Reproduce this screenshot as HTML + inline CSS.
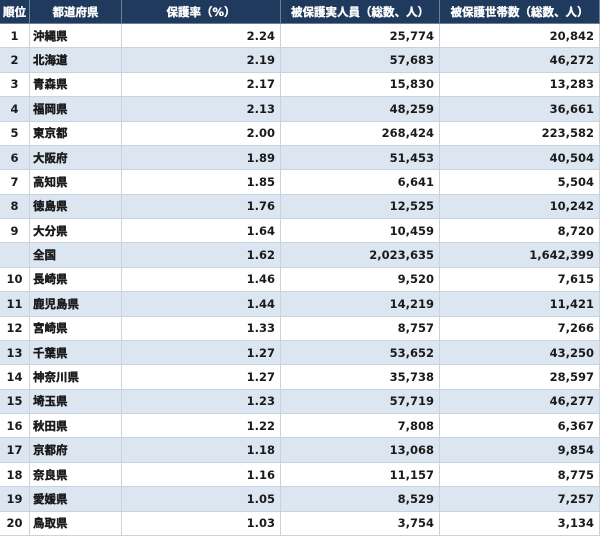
<!DOCTYPE html>
<html><head><meta charset="utf-8"><style>
body{margin:0;width:600px;height:536px;overflow:hidden;background:#fff}
.g{display:grid;grid-template-columns:30px 92px 159px 159px 160px;grid-template-rows:24px repeat(21,1fr);height:536px;width:600px;font-family:"DejaVu Sans","Noto Sans CJK JP",sans-serif;font-weight:bold;font-size:11.5px;color:#1a1a1a}
.g div{display:flex;align-items:center;border-right:1px solid #c9d3de;border-bottom:1px solid #c9d3de;box-sizing:border-box;white-space:nowrap}
.h{background:#1f3a5c!important;color:#fff;justify-content:center;border-color:#6a7f99!important;font-size:11.5px;-webkit-text-stroke:0.35px #fff}
.s{background:#dce6f1}
.r{justify-content:center}
.n{padding-left:3px;-webkit-text-stroke:0.4px #1a1a1a}
.v{justify-content:flex-end;padding-right:5px}
</style></head><body><div class="g" id="g">
<div class="h">順位</div><div class="h">都道府県</div><div class="h">保護率（%）</div><div class="h">被保護実人員（総数、人）</div><div class="h">被保護世帯数（総数、人）</div>
</div>
<script>
var d=[["1","沖縄県","2.24","25,774","20,842"],["2","北海道","2.19","57,683","46,272"],["3","青森県","2.17","15,830","13,283"],["4","福岡県","2.13","48,259","36,661"],["5","東京都","2.00","268,424","223,582"],["6","大阪府","1.89","51,453","40,504"],["7","高知県","1.85","6,641","5,504"],["8","徳島県","1.76","12,525","10,242"],["9","大分県","1.64","10,459","8,720"],["","全国","1.62","2,023,635","1,642,399"],["10","長崎県","1.46","9,520","7,615"],["11","鹿児島県","1.44","14,219","11,421"],["12","宮崎県","1.33","8,757","7,266"],["13","千葉県","1.27","53,652","43,250"],["14","神奈川県","1.27","35,738","28,597"],["15","埼玉県","1.23","57,719","46,277"],["16","秋田県","1.22","7,808","6,367"],["17","京都府","1.18","13,068","9,854"],["18","奈良県","1.16","11,157","8,775"],["19","愛媛県","1.05","8,529","7,257"],["20","鳥取県","1.03","3,754","3,134"]];
var h="";d.forEach(function(r,i){var s=i%2?" s":"";h+='<div class="r'+s+'">'+r[0]+'</div><div class="n'+s+'">'+r[1]+'</div><div class="v'+s+'">'+r[2]+'</div><div class="v'+s+'">'+r[3]+'</div><div class="v'+s+'">'+r[4]+'</div>';});
document.getElementById("g").insertAdjacentHTML("beforeend",h);
</script></body></html>
